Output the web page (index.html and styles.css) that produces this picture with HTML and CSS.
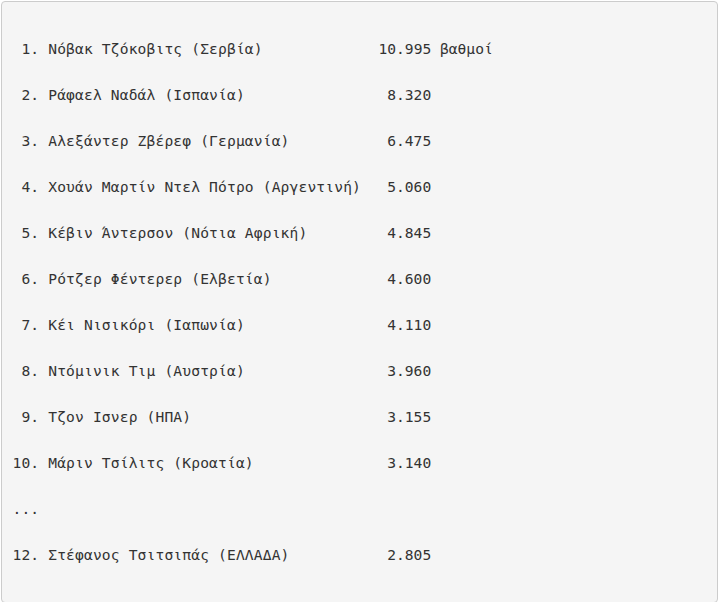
FILE: index.html
```html
<!DOCTYPE html>
<html lang="el">
<head>
<meta charset="utf-8">
<title>Κατάταξη ATP</title>
<link rel="stylesheet" href="styles.css">
</head>
<body>
<div class="box">
  <div class="row"><span class="name"> 1. Νόβακ Τζόκοβιτς (Σερβία)</span><span class="pts">10.995</span><span class="unit">βαθμοί</span></div>
  <div class="row"><span class="name"> 2. Ράφαελ Ναδάλ (Ισπανία)</span><span class="pts">8.320</span></div>
  <div class="row"><span class="name"> 3. Αλεξάντερ Ζβέρεφ (Γερμανία)</span><span class="pts">6.475</span></div>
  <div class="row"><span class="name"> 4. Χουάν Μαρτίν Ντελ Πότρο (Αργεντινή)</span><span class="pts">5.060</span></div>
  <div class="row"><span class="name"> 5. Κέβιν Άντερσον (Νότια Αφρική)</span><span class="pts">4.845</span></div>
  <div class="row"><span class="name"> 6. Ρότζερ Φέντερερ (Ελβετία)</span><span class="pts">4.600</span></div>
  <div class="row"><span class="name"> 7. Κέι Νισικόρι (Ιαπωνία)</span><span class="pts">4.110</span></div>
  <div class="row"><span class="name"> 8. Ντόμινικ Τιμ (Αυστρία)</span><span class="pts">3.960</span></div>
  <div class="row"><span class="name"> 9. Τζον Ισνερ (ΗΠΑ)</span><span class="pts">3.155</span></div>
  <div class="row"><span class="name">10. Μάριν Τσίλιτς (Κροατία)</span><span class="pts">3.140</span></div>
  <div class="row"><span class="name">...</span></div>
  <div class="row"><span class="name">12. Στέφανος Τσιτσιπάς (ΕΛΛΑΔΑ)</span><span class="pts">2.805</span></div>
</div>
</body>
</html>
```
FILE: styles.css
```css
html, body {
  margin: 0;
  padding: 0;
  background: #ffffff;
}
body {
  padding: 1px 4px 0 1px;
}
.box {
  box-sizing: border-box;
  border: 1px solid #cccccc;
  border-radius: 4px;
  background: #f5f5f5;
  color: #333333;
  font-family: "DejaVu Sans Mono", "Liberation Mono", monospace;
  font-size: 14.6px;
  line-height: 23px;
  padding: 34.5px 10.5px 36.5px 10.5px;
  display: flex;
  flex-direction: column;
  gap: 23px;
}
.row {
  display: flex;
  white-space: pre;
  height: 23px;
}
.name {
  width: 366px;
  flex: none;
  letter-spacing: 0.15px;
}
.pts {
  width: 6ch;
  text-align: right;
  flex: none;
}
.unit {
  margin-left: 1ch;
}
```
